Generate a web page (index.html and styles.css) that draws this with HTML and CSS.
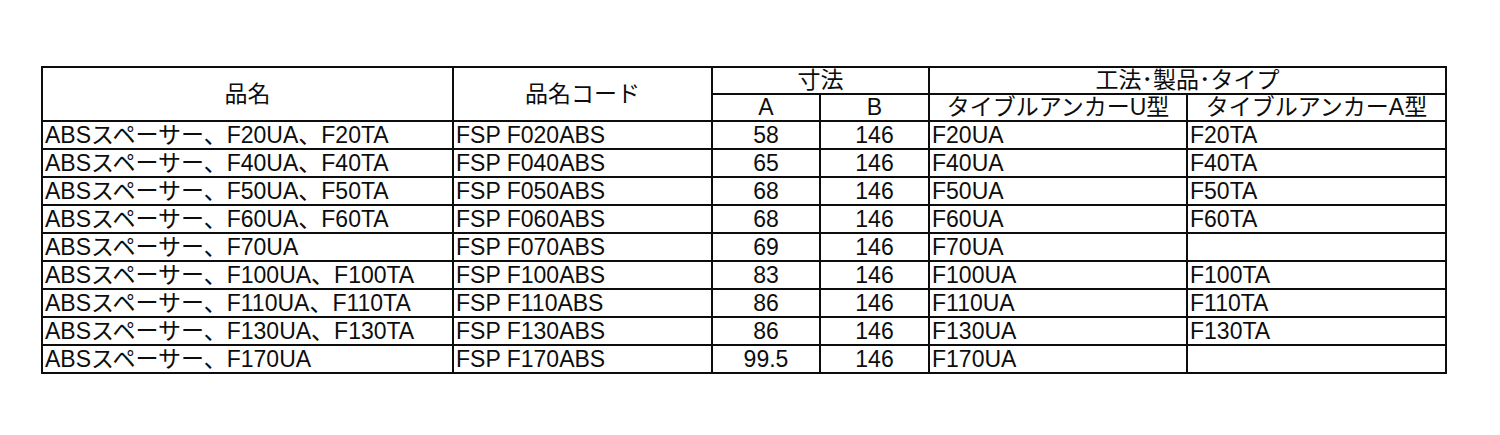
FILE: index.html
```html
<!DOCTYPE html>
<html lang="ja">
<head>
<meta charset="utf-8">
<title>ABSスペーサー</title>
<link rel="stylesheet" href="styles.css">
</head>
<body>
<table class="spec">
  <colgroup>
    <col class="c-name">
    <col class="c-code">
    <col class="c-a">
    <col class="c-b">
    <col class="c-u">
    <col class="c-t">
  </colgroup>
  <thead>
    <tr class="hrow">
      <th rowspan="2">品名</th>
      <th rowspan="2">品名コード</th>
      <th colspan="2">寸法</th>
      <th colspan="2">工法･製品･タイプ</th>
    </tr>
    <tr class="hrow">
      <th>A</th>
      <th>B</th>
      <th>タイブルアンカーU型</th>
      <th>タイブルアンカーA型</th>
    </tr>
  </thead>
  <tbody>
    <tr><td>ABSスペーサー、F20UA、F20TA</td><td>FSP F020ABS</td><td class="num">58</td><td class="num">146</td><td>F20UA</td><td>F20TA</td></tr>
    <tr><td>ABSスペーサー、F40UA、F40TA</td><td>FSP F040ABS</td><td class="num">65</td><td class="num">146</td><td>F40UA</td><td>F40TA</td></tr>
    <tr><td>ABSスペーサー、F50UA、F50TA</td><td>FSP F050ABS</td><td class="num">68</td><td class="num">146</td><td>F50UA</td><td>F50TA</td></tr>
    <tr><td>ABSスペーサー、F60UA、F60TA</td><td>FSP F060ABS</td><td class="num">68</td><td class="num">146</td><td>F60UA</td><td>F60TA</td></tr>
    <tr><td>ABSスペーサー、F70UA</td><td>FSP F070ABS</td><td class="num">69</td><td class="num">146</td><td>F70UA</td><td></td></tr>
    <tr><td>ABSスペーサー、F100UA、F100TA</td><td>FSP F100ABS</td><td class="num">83</td><td class="num">146</td><td>F100UA</td><td>F100TA</td></tr>
    <tr><td>ABSスペーサー、F110UA、F110TA</td><td>FSP F110ABS</td><td class="num">86</td><td class="num">146</td><td>F110UA</td><td>F110TA</td></tr>
    <tr><td>ABSスペーサー、F130UA、F130TA</td><td>FSP F130ABS</td><td class="num">86</td><td class="num">146</td><td>F130UA</td><td>F130TA</td></tr>
    <tr><td>ABSスペーサー、F170UA</td><td>FSP F170ABS</td><td class="num">99.5</td><td class="num">146</td><td>F170UA</td><td></td></tr>
  </tbody>
</table>
</body>
</html>
```

FILE: styles.css
```css
html, body {
  margin: 0;
  padding: 0;
  background: #ffffff;
}

body {
  padding: 66px 0 0 41px;
  font-family: "Liberation Sans", "Noto Sans CJK JP", sans-serif;
  color: #0d0d0d;
}

.spec {
  border-collapse: collapse;
  table-layout: fixed;
  width: 1406px;
  font-size: 23px;
  line-height: 25px;
}

.c-name { width: 411px; }
.c-code { width: 259px; }
.c-a { width: 108px; }
.c-b { width: 109px; }
.c-u { width: 258px; }
.c-t { width: 259px; }

.spec th,
.spec td {
  border: 2px solid #0d0d0d;
  padding: 0 0 0 2px;
  white-space: nowrap;
  overflow: hidden;
  height: 26px;
  vertical-align: middle;
}

.spec th {
  font-weight: normal;
  text-align: center;
  padding: 0;
  height: 25px;
}

.spec td.num {
  text-align: center;
  padding: 0;
}
```
